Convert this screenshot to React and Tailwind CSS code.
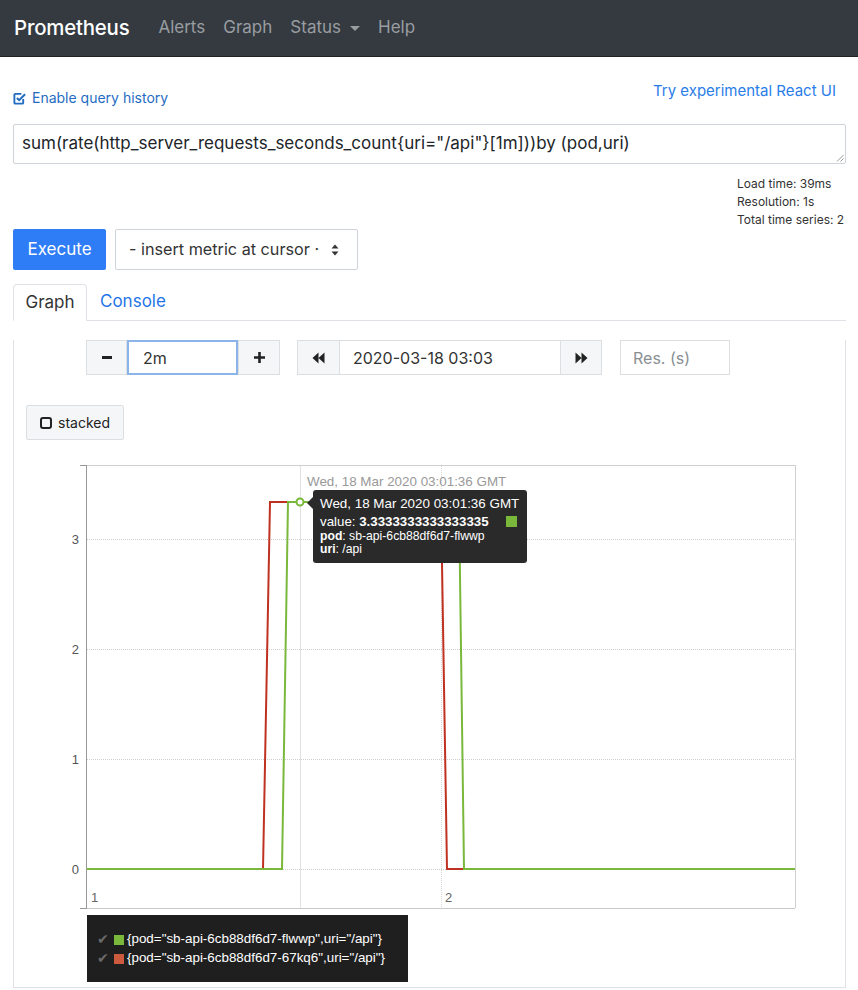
import React from 'react';

const ui = { fontFamily: 'Inter, "Noto Sans", sans-serif' };
const arial = { fontFamily: '"Liberation Sans", Arial, sans-serif' };

function CheckSquare() {
  return (
    <svg width="13" height="13" viewBox="0 0 14 14" className="mr-[6px] shrink-0">
      <path d="M11 7.5V11.5a1 1 0 0 1-1 1H2.5a1 1 0 0 1-1-1V3a1 1 0 0 1 1-1H9" fill="none" stroke="currentColor" strokeWidth="2" />
      <path d="M4.2 6.4l2.4 2.4L13 2.4" fill="none" stroke="currentColor" strokeWidth="2.2" />
    </svg>
  );
}

function SelectArrows() {
  return (
    <svg width="8" height="12" viewBox="0 0 8 12" className="ml-[12px]">
      <path d="M4 0.5L7.5 4.5H0.5Z" fill="#333" />
      <path d="M4 11.5L7.5 7.5H0.5Z" fill="#333" />
    </svg>
  );
}

function Backward() {
  return (
    <svg width="13" height="12" viewBox="0 0 13 12">
      <path d="M6.5 0.5V11.5L0.5 6Z M12.5 0.5V11.5L6.5 6Z" fill="#222" />
    </svg>
  );
}

function Forward() {
  return (
    <svg width="13" height="12" viewBox="0 0 13 12">
      <path d="M0.5 0.5V11.5L6.5 6Z M6.5 0.5V11.5L12.5 6Z" fill="#222" />
    </svg>
  );
}

function Chart() {
  const green = '#7ab83c';
  const red = '#bf3222';
  const grid = [539, 649, 759, 869];
  return (
    <div className="relative mt-[15px] h-[455px]">
      <svg width="831" height="455" viewBox="14 455 831 455" className="block">
        {/* frame */}
        <line x1="86" y1="465.5" x2="795" y2="465.5" stroke="#d0d0d0" />
        <line x1="795.5" y1="465" x2="795.5" y2="908" stroke="#d0d0d0" />
        <line x1="86" y1="908.5" x2="795" y2="908.5" stroke="#c8c8c8" />
        {/* grid */}
        {grid.map((y) => (
          <line key={y} x1="87" y1={y + 0.5} x2="795" y2={y + 0.5} stroke="#cfcfcf" strokeDasharray="1 1" />
        ))}
        <line x1="441.5" y1="466" x2="441.5" y2="908" stroke="#d6d6d6" strokeDasharray="1 1" />
        <line x1="300.5" y1="466" x2="300.5" y2="908" stroke="#e2e2e2" />
        {/* y axis */}
        <line x1="86.5" y1="465" x2="86.5" y2="909" stroke="#999" />
        <line x1="80" y1="465.5" x2="86" y2="465.5" stroke="#999" />
        <line x1="80" y1="908.5" x2="86" y2="908.5" stroke="#999" />
        <g fill="#555" fontSize="13" textAnchor="end" style={arial}>
          <text x="79" y="543.5">3</text>
          <text x="79" y="653.5">2</text>
          <text x="79" y="763.5">1</text>
          <text x="79" y="873.5">0</text>
        </g>
        <g fill="#666" fontSize="13" style={arial}>
          <text x="91" y="902">1</text>
          <text x="445" y="902">2</text>
        </g>
        {/* series */}
        <polyline points="87,869 263,869 270,502 441,502 447,869 795,869" fill="none" stroke={red} strokeWidth="2" />
        <polyline points="87,869 282,869 288,502 459,502 464,869 795,869" fill="none" stroke={green} strokeWidth="2" />
        <circle cx="300" cy="502" r="3.5" fill="#fff" stroke={green} strokeWidth="2" />
        <text x="307" y="486" fill="#999" fontSize="13.4" style={arial}>
          Wed, 18 Mar 2020 03:01:36 GMT
        </text>
      </svg>

      {/* hover detail */}
      <div
        className="absolute left-[299px] top-[35px] w-[214px] h-[73px] rounded-[3px] bg-[#2a2a2a] text-white pl-[7px] pt-[5px]"
        style={arial}
      >
        <div className="absolute left-[-6px] top-[7px] w-0 h-0 border-y-[6px] border-r-[6px] border-y-transparent border-r-[#2a2a2a]" />
        <div className="text-[13.4px] leading-[17px]">Wed, 18 Mar 2020 03:01:36 GMT</div>
        <div className="flex items-center text-[13.3px] leading-[17px] mt-[1px]">
          <span>
            value: <b>3.3333333333333335</b>
          </span>
          <span className="ml-auto mr-[10px] w-[11px] h-[11px] bg-[#7ab83c] inline-block" />
        </div>
        <div className="text-[12.2px] leading-[13px]">
          <b>pod</b>: sb-api-6cb88df6d7-flwwp
        </div>
        <div className="text-[12.2px] leading-[13px]">
          <b>uri</b>: /api
        </div>
      </div>
    </div>
  );
}

function Legend() {
  const rows = [
    { color: '#7ab83c', label: '{pod="sb-api-6cb88df6d7-flwwp",uri="/api"}' },
    { color: '#cc5a3e', label: '{pod="sb-api-6cb88df6d7-67kq6",uri="/api"}' },
  ];
  return (
    <div className="ml-[73px] mt-[5px] w-[321px] h-[67px] bg-[#1f1f1f] pt-[15px] pl-[10px]" style={arial}>
      {rows.map((r) => (
        <div key={r.label} className="flex items-center h-[19px] text-[13.4px] text-white">
          <span className="text-[#6a6a6a] text-[14px] w-[17px]">✔</span>
          <span className="w-[10px] h-[10px] mr-[3px] inline-block" style={{ backgroundColor: r.color }} />
          <span>{r.label}</span>
        </div>
      ))}
    </div>
  );
}

export default function App() {
  return (
    <div className="min-h-screen bg-white" style={ui}>
      {/* Navbar */}
      <nav className="h-[57px] bg-[#343a40] border-b border-[#1d2124] flex items-center px-[14px]">
        <span className="text-white text-[20.4px] font-medium mr-[20px] tracking-[-0.2px]">Prometheus</span>
        <a className="px-[9px] text-[17px] text-[#9a9da0]">Alerts</a>
        <a className="px-[9px] text-[17px] text-[#9a9da0]">Graph</a>
        <a className="px-[9px] text-[17px] text-[#9a9da0] flex items-center">
          Status
          <span className="ml-[9px] w-0 h-0 border-x-[5px] border-t-[5px] border-x-transparent border-t-[#9a9da0]" />
        </a>
        <a className="px-[9px] text-[17px] text-[#9a9da0]">Help</a>
      </nav>

      <div className="pl-[13px] pr-[12px]">
        {/* top row */}
        <div className="flex justify-between items-start pt-[23px]">
          <div className="flex items-center pt-[8px] text-[14px] leading-[20px] text-[#1f6cc2]">
            <CheckSquare />
            Enable query history
          </div>
          <a className="text-[15px] leading-[22px] text-[#2a7de8] mr-[10px]">Try experimental React UI</a>
        </div>

        {/* expression */}
        <div className="mt-[16px] relative">
          <div className="h-[40px] border border-[#ced4da] rounded-[2px] px-[8px] flex items-center text-[17px] text-[#212529]">
            sum(rate(http_server_requests_seconds_count{'{'}uri="/api"{'}'}[1m]))by (pod,uri)
          </div>
          <svg width="8" height="8" viewBox="0 0 8 8" className="absolute right-[2px] bottom-[2px]">
            <path d="M7.5 1L1 7.5M7.5 4.5L4.5 7.5" stroke="#999" strokeWidth="1" />
          </svg>
        </div>

        {/* stats */}
        <div className="flex justify-end mt-[11px]">
          <div className="w-[109px] text-[12px] leading-[18px] text-[#333]">
            <div>Load time: 39ms</div>
            <div>Resolution: 1s</div>
            <div>Total time series: 2</div>
          </div>
        </div>

        {/* execute row */}
        <div className="flex items-center">
          <button className="h-[41px] w-[93px] bg-[#2f7df6] text-white text-[17px] rounded-[2px]">Execute</button>
          <div className="ml-[9px] h-[41px] w-[243px] border border-[#ced4da] rounded-[2px] flex items-center pl-[13px] text-[16.2px] text-[#333]">
            - insert metric at cursor ·
            <SelectArrows />
          </div>
        </div>

        {/* tabs */}
        <div className="mt-[14px] flex border-b border-[#dee2e6] h-[37px]">
          <div className="w-[74px] h-[37px] border border-[#dee2e6] border-b-white rounded-t-[4px] bg-white flex items-center justify-center text-[17px] text-[#333]">
            Graph
          </div>
          <div className="px-[13px] h-[36px] flex items-center text-[17px] text-[#1f75e8]">Console</div>
        </div>

        {/* tab content */}
        <div className="border-x border-b border-[#dee2e6] pb-[5px]">
          {/* controls */}
          <div className="flex items-center mt-[19px] ml-[72px] h-[35px]">
            <div className="flex h-[35px]">
              <button className="w-[41px] h-[35px] bg-[#f5f6f7] border border-[#dcdfe2] flex items-center justify-center">
                <span className="w-[10px] h-[3px] bg-[#222] block" />
              </button>
              <div className="w-[111px] h-[35px] border-[2px] border-[#8ab4ea] flex items-center pl-[14px] text-[16px] text-[#333]">
                2m
              </div>
              <button className="w-[42px] h-[35px] bg-[#f5f6f7] border border-[#dcdfe2] flex items-center justify-center">
                <svg width="13" height="13" viewBox="0 0 13 13">
                  <path d="M6.5 1V12M1 6.5H12" stroke="#222" strokeWidth="2.6" />
                </svg>
              </button>
            </div>
            <div className="flex h-[35px] ml-[17px]">
              <button className="w-[43px] h-[35px] bg-[#f5f6f7] border border-[#dcdfe2] flex items-center justify-center">
                <Backward />
              </button>
              <div className="w-[220px] h-[35px] border-y border-[#dcdfe2] flex items-center pl-[13px] text-[16px] text-[#333]">
                2020-03-18 03:03
              </div>
              <button className="w-[42px] h-[35px] bg-[#f5f6f7] border border-[#dcdfe2] flex items-center justify-center">
                <Forward />
              </button>
            </div>
            <div className="ml-[18px] w-[110px] h-[35px] border border-[#dcdfe2] flex items-center pl-[12px] text-[16px] text-[#8a8f94]">
              Res. (s)
            </div>
          </div>

          {/* stacked */}
          <div className="mt-[30px] ml-[12px]">
            <button className="h-[35px] w-[98px] bg-[#f5f6f7] border border-[#dcdfe2] rounded-[2px] flex items-center pl-[13px] text-[14px] text-[#222]">
              <span className="w-[12px] h-[12px] border-[2px] border-[#222] rounded-[3px] mr-[6px] inline-block" />
              stacked
            </button>
          </div>

          <Chart />
          <Legend />
        </div>
      </div>
    </div>
  );
}
